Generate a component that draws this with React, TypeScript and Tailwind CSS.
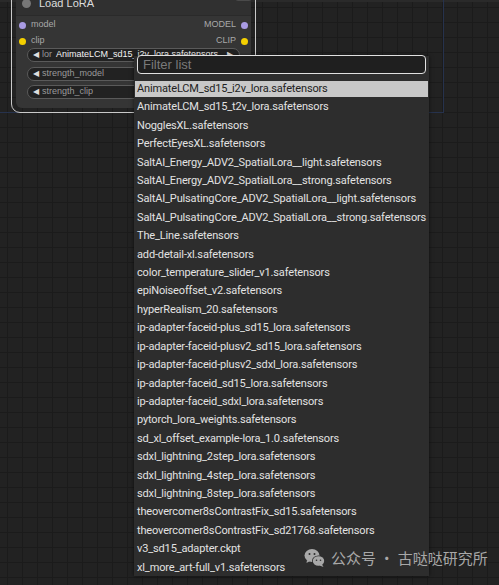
const loras = [
  "AnimateLCM_sd15_i2v_lora.safetensors",
  "AnimateLCM_sd15_t2v_lora.safetensors",
  "NogglesXL.safetensors",
  "PerfectEyesXL.safetensors",
  "SaltAI_Energy_ADV2_SpatialLora__light.safetensors",
  "SaltAI_Energy_ADV2_SpatialLora__strong.safetensors",
  "SaltAI_PulsatingCore_ADV2_SpatialLora__light.safetensors",
  "SaltAI_PulsatingCore_ADV2_SpatialLora__strong.safetensors",
  "The_Line.safetensors",
  "add-detail-xl.safetensors",
  "color_temperature_slider_v1.safetensors",
  "epiNoiseoffset_v2.safetensors",
  "hyperRealism_20.safetensors",
  "ip-adapter-faceid-plus_sd15_lora.safetensors",
  "ip-adapter-faceid-plusv2_sd15_lora.safetensors",
  "ip-adapter-faceid-plusv2_sdxl_lora.safetensors",
  "ip-adapter-faceid_sd15_lora.safetensors",
  "ip-adapter-faceid_sdxl_lora.safetensors",
  "pytorch_lora_weights.safetensors",
  "sd_xl_offset_example-lora_1.0.safetensors",
  "sdxl_lightning_2step_lora.safetensors",
  "sdxl_lightning_4step_lora.safetensors",
  "sdxl_lightning_8step_lora.safetensors",
  "theovercomer8sContrastFix_sd15.safetensors",
  "theovercomer8sContrastFix_sd21768.safetensors",
  "v3_sd15_adapter.ckpt",
  "xl_more_art-full_v1.safetensors",
];

const Slot = ({ label, color }: { label: string; color: string }) => (
  <div className="flex items-center justify-between h-[16px] px-[3px]">
    <div className="flex items-center gap-[5px]">
      <span className={`w-[7px] h-[7px] rounded-full ${color}`} />
      <span>{label}</span>
    </div>
    <div className="flex items-center gap-[5px]">
      <span>{label.toUpperCase()}</span>
      <span className={`w-[7px] h-[7px] rounded-full ${color}`} />
    </div>
  </div>
);

const Widget = ({ label, value }: { label: string; value?: string }) => (
  <div className="relative flex items-center h-[14px] rounded-full bg-[#222222] border border-[#5a5a5a] pl-[5px] pr-[6px] text-[9px]">
    <span className="text-[#dddddd] text-[8px] leading-none">◀</span>
    <span className="ml-[3px] text-[#9a9a9a]">{label}</span>
    {value && (
      <span className="absolute right-[21px] text-[#f2f2f2]">{value}</span>
    )}
    <span className="ml-auto text-[#dddddd] text-[8px] leading-none">▶</span>
  </div>
);

const WeChatIcon = () => (
  <svg width="22" height="20" viewBox="0 0 22 20">
    <ellipse cx="8" cy="7.5" rx="7.5" ry="6.5" fill="#a8a8a8" />
    <path d="M3 12 L2.5 15 L6 13 Z" fill="#a8a8a8" />
    <ellipse cx="14.5" cy="13" rx="6.5" ry="5.5" fill="#2d2d2d" />
    <ellipse cx="14.5" cy="13" rx="5.7" ry="4.8" fill="#a8a8a8" />
    <path d="M18 16.5 L19.5 19 L15.5 17.5 Z" fill="#a8a8a8" />
    <circle cx="5.5" cy="6" r="1" fill="#2d2d2d" />
    <circle cx="10.5" cy="6" r="1" fill="#2d2d2d" />
    <circle cx="12.5" cy="12.2" r="0.8" fill="#2d2d2d" />
    <circle cx="16.5" cy="12.2" r="0.8" fill="#2d2d2d" />
  </svg>
);

export default function App() {
  return (
    <div className="relative w-[499px] h-[585px] overflow-hidden bg-[#222222] bg-[linear-gradient(to_right,#1b1b1b_1px,transparent_1px),linear-gradient(to_bottom,#1b1b1b_1px,transparent_1px)] bg-[size:15px_15px] bg-[position:7px_7px] font-['Liberation_Sans',Arial,sans-serif]">
      {/* top strip */}
      <div className="absolute left-0 top-0 w-full h-[2px] bg-[#2a2a2a]" />

      {/* group frame */}
      <div className="absolute left-[-10px] top-[-10px] w-[454px] h-[123px] border border-[#26324d]" />

      {/* Load LoRA node */}
      <div className="absolute left-[11px] top-[-14px] w-[245px] h-[127px] rounded-[9px] border border-[#c9c9c9] p-[4px]">
        <div className="h-full rounded-[6px] bg-[#353535] flex flex-col">
          <div className="relative flex items-center h-[25px] bg-[#303030] border-b border-[#2a2a2a] pl-[6px] gap-[8px]">
            <span className="w-[9px] h-[9px] rounded-full bg-[#777777]" />
            <span className="text-[#dddddd] text-[11px]">Load LoRA</span>
            <span className="absolute right-[-1px] top-[-2px] w-[17px] h-[12px] rounded-[3px] border border-[#4a4a4a]" />
          </div>
          <div className="flex flex-col pt-[1px] text-[9px] text-[#a8a8a8]">
            <Slot label="model" color="bg-[#a99be3]" />
            <Slot label="clip" color="bg-[#f4d000]" />
            <div className="flex flex-col gap-[4.5px] px-[11px] mt-[-1px]">
              <Widget label="lor" value="AnimateLCM_sd15_i2v_lora.safetensors" />
              <Widget label="strength_model" />
              <Widget label="strength_clip" />
            </div>
          </div>
        </div>
      </div>

      {/* dropdown menu */}
      <div className="absolute left-[134px] top-[56px] w-[295px] h-[520px] bg-[#2d2d2d] shadow-[0_0_4px_rgba(0,0,0,0.6)]">
        <div className="absolute left-[3px] top-[-1px] w-[289px] h-[19px] rounded-[4px] border border-[#e0e0e0] bg-[#1f1f1f] flex items-center px-[5px]">
          <span className="text-[#7a7a7a] text-[13px]">Filter list</span>
        </div>
        <div className="flex flex-col pt-[22.6px] px-[1px] font-['Roboto',Arial,sans-serif] text-[11px] tracking-[-0.15px]">
          {loras.map((name, i) => (
            <div
              key={name}
              className={`h-[16px] leading-[16px] mt-[2.42px] pl-[2px] whitespace-nowrap ${
                i === 0 ? "bg-[#c8c8c8] text-[#222222]" : "text-[#e2e2e2]"
              }`}
            >
              {name}
            </div>
          ))}
        </div>
      </div>

      {/* watermark */}
      <div className="absolute left-[304px] top-[547px] flex items-center gap-[5px] text-[#a8a8a8] text-[15px] font-['Noto_Sans_CJK_SC',sans-serif]">
        <WeChatIcon />
        <span>公众号 · 古哒哒研究所</span>
      </div>
    </div>
  );
}
